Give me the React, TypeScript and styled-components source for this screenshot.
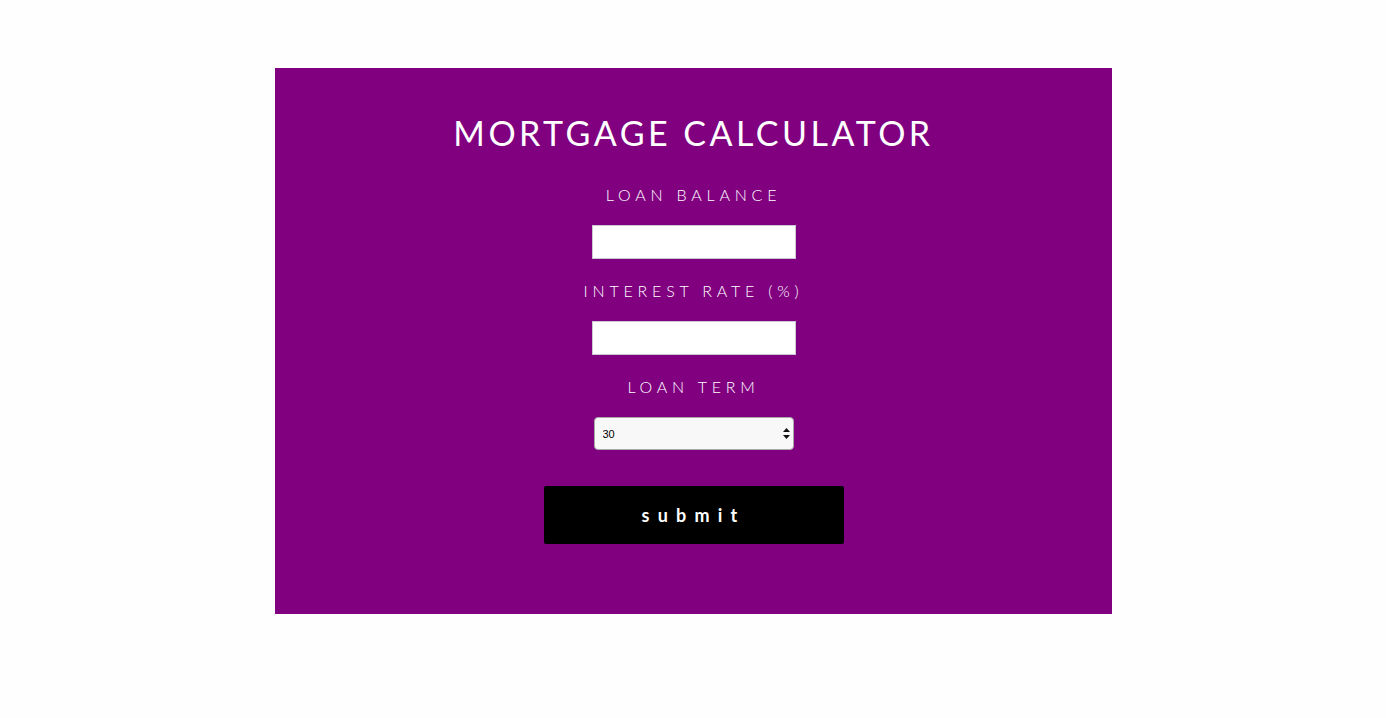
import React from "react";
import styled, { createGlobalStyle } from "styled-components";

const Global = createGlobalStyle`
  html, body { margin: 0; padding: 0; background: #fefefe; }
  body { font-family: Lato, "Open Sans", sans-serif; }
  * { box-sizing: border-box; }
`;

const Page = styled.div`
  padding-top: 68px;
  display: flex;
  justify-content: center;
`;

const Panel = styled.form`
  width: 837px;
  height: 546px;
  background: #800080;
  display: flex;
  flex-direction: column;
  align-items: center;
  padding: 48px 0 0 1px;
`;

const Title = styled.h1`
  margin: 0 0 13px;
  font-family: Lato, sans-serif;
  font-weight: 400;
  font-size: 34px;
  line-height: 34px;
  letter-spacing: 3.5px;
  color: #fff;
`;

const Label = styled.label`
  display: block;
  margin: 24px 0 22px;
  font-family: Lato, sans-serif;
  font-weight: 300;
  font-size: 16px;
  line-height: 16px;
  letter-spacing: 4.8px;
  color: #fff;
`;

const TextInput = styled.input`
  width: 204px;
  height: 34px;
  margin: 0;
  border: 1px solid #cfc6d4;
  background: #fff;
  outline: none;
  padding: 0 8px;
`;

const SelectWrap = styled.div`
  position: relative;
  width: 200px;
  height: 33px;
`;

const Select = styled.select`
  appearance: none;
  -webkit-appearance: none;
  width: 100%;
  height: 100%;
  margin: 0;
  border: 1px solid #a9a9a9;
  border-radius: 4px;
  background: #f8f8f8;
  padding: 0 0 0 8px;
  font-family: "Liberation Sans", Arial, sans-serif;
  font-size: 11px;
  color: #000;
  outline: none;
`;

const Arrows = styled.svg`
  position: absolute;
  right: 4px;
  top: 11px;
  pointer-events: none;
`;

const Submit = styled.button`
  margin-top: 36px;
  width: 300px;
  height: 58px;
  border: none;
  border-radius: 2px;
  background: #000;
  color: #fff;
  font-family: Lato, sans-serif;
  font-weight: 700;
  font-size: 18px;
  letter-spacing: 8.2px;
  padding: 0;
  cursor: pointer;
`;

export default function App() {
  return (
    <>
      <Global />
      <Page>
        <Panel onSubmit={(e) => e.preventDefault()}>
          <Title>MORTGAGE CALCULATOR</Title>
          <Label>LOAN BALANCE</Label>
          <TextInput type="text" />
          <Label>INTEREST RATE (%)</Label>
          <TextInput type="text" />
          <Label>LOAN TERM</Label>
          <SelectWrap>
            <Select defaultValue="30">
              <option value="30">30</option>
              <option value="20">20</option>
              <option value="15">15</option>
              <option value="10">10</option>
            </Select>
            <Arrows width="7" height="11" viewBox="0 0 7 11">
              <path d="M3.5 0 L7 4 L0 4 Z" fill="#111" />
              <path d="M3.5 11 L7 7 L0 7 Z" fill="#111" />
            </Arrows>
          </SelectWrap>
          <Submit type="submit">submit</Submit>
        </Panel>
      </Page>
    </>
  );
}
